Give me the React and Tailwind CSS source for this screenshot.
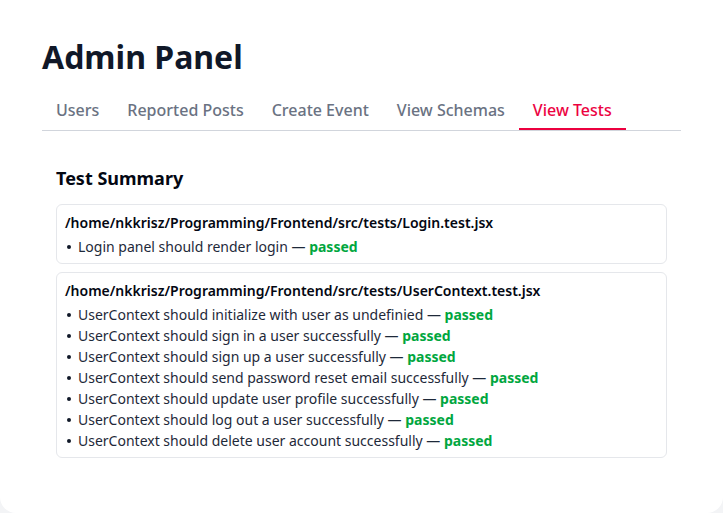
import React, { useState } from 'react';

const tabs = ['Users', 'Reported Posts', 'Create Event', 'View Schemas', 'View Tests'];

const suites = [
  {
    file: '/home/nkkrisz/Programming/Frontend/src/tests/Login.test.jsx',
    tests: ['Login panel should render login'],
  },
  {
    file: '/home/nkkrisz/Programming/Frontend/src/tests/UserContext.test.jsx',
    tests: [
      'UserContext should initialize with user as undefinied',
      'UserContext should sign in a user successfully',
      'UserContext should sign up a user successfully',
      'UserContext should send password reset email successfully',
      'UserContext should update user profile successfully',
      'UserContext should log out a user successfully',
      'UserContext should delete user account successfully',
    ],
  },
];

const App = () => {
  const [active, setActive] = useState('View Tests');

  return (
    <div className="min-h-screen bg-gray-100" style={{ fontFamily: '"Noto Sans", "Open Sans", sans-serif' }}>
      {/* Card */}
      <div className="h-[513px] rounded-b-2xl bg-white px-[42px] pt-[37px]">
        <h1 className="text-[32px] font-bold leading-10 text-gray-900">Admin Panel</h1>

        {/* Tabs */}
        <div className="mt-3 flex border-b border-gray-300">
          {tabs.map((tab) => (
            <button
              key={tab}
              onClick={() => setActive(tab)}
              className={
                tab === active
                  ? 'border-b-2 border-rose-600 px-3.5 pt-[9px] pb-1.5 text-base font-medium leading-6 text-rose-600'
                  : 'border-b-2 border-transparent px-3.5 pt-[9px] pb-1.5 text-base font-medium leading-6 text-gray-500'
              }
            >
              {tab}
            </button>
          ))}
        </div>

        {/* Test summary */}
        <div className="mt-[33px] px-3.5">
          <h2 className="text-lg font-bold leading-7 text-gray-950">Test Summary</h2>
          <div className="mt-3 flex flex-col gap-2">
            {suites.map((suite) => (
              <div key={suite.file} className="rounded-md border border-gray-200 px-2 pt-[7px] pb-[6px]">
                <div className="text-sm font-semibold leading-[21px] text-gray-950">{suite.file}</div>
                <ul className="mt-[3px]">
                  {suite.tests.map((t) => (
                    <li key={t} className="flex items-center text-sm leading-[21px] text-gray-800">
                      <span className="ml-[2px] mr-[7px] size-[4px] shrink-0 rounded-full bg-gray-900" />
                      <span>
                        {t} — <span className="font-bold text-green-600">passed</span>
                      </span>
                    </li>
                  ))}
                </ul>
              </div>
            ))}
          </div>
        </div>
      </div>
    </div>
  );
};

export default App;
